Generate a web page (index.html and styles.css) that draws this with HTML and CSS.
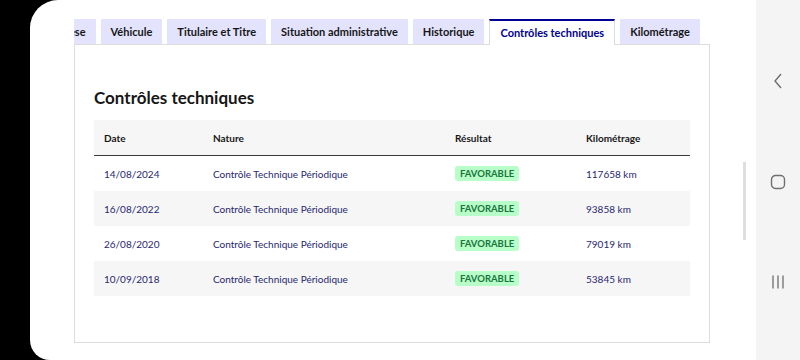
FILE: index.html
```html
<!doctype html>
<html>
  <head>
    <meta charset="UTF-8" />
    <title>Contrôles techniques</title>
    <link rel="stylesheet" href="styles.css">
  </head>
  <body>
    <div class="device">
      <div class="screen">
        <div class="page">
          <div class="tabs">
            <ul class="tabs-list">
              <li class="tab">Synthèse</li>
              <li class="tab">Véhicule</li>
              <li class="tab">Titulaire et Titre</li>
              <li class="tab">Situation administrative</li>
              <li class="tab">Historique</li>
              <li class="tab tab-active">Contrôles techniques</li>
              <li class="tab">Kilométrage</li>
            </ul>
            <div class="panel">
              <h2 class="title">Contrôles techniques</h2>
              <table class="table">
                <thead>
                  <tr>
                    <th class="col-date">Date</th>
                    <th class="col-nature">Nature</th>
                    <th class="col-result">Résultat</th>
                    <th>Kilométrage</th>
                  </tr>
                </thead>
                <tbody>
                  <tr>
                    <td>14/08/2024</td>
                    <td>Contrôle Technique Périodique</td>
                    <td><span class="badge">Favorable</span></td>
                    <td>117658 km</td>
                  </tr>
                  <tr>
                    <td>16/08/2022</td>
                    <td>Contrôle Technique Périodique</td>
                    <td><span class="badge">Favorable</span></td>
                    <td>93858 km</td>
                  </tr>
                  <tr>
                    <td>26/08/2020</td>
                    <td>Contrôle Technique Périodique</td>
                    <td><span class="badge">Favorable</span></td>
                    <td>79019 km</td>
                  </tr>
                  <tr>
                    <td>10/09/2018</td>
                    <td>Contrôle Technique Périodique</td>
                    <td><span class="badge">Favorable</span></td>
                    <td>53845 km</td>
                  </tr>
                </tbody>
              </table>
            </div>
          </div>
          <div class="scrollbar"></div>
        </div>
        <div class="navbar">
          <svg width="12" height="18" viewBox="0 0 12 18"><path d="M9 2 L3 9 L9 16" fill="none" stroke="#6f6f6f" stroke-width="1.4"/></svg>
          <svg width="16" height="16" viewBox="0 0 16 16"><rect x="1.5" y="1.5" width="13" height="13" rx="4" fill="none" stroke="#6f6f6f" stroke-width="1.4"/></svg>
          <svg width="16" height="16" viewBox="0 0 16 16"><path d="M3 1.5 V14.5 M8 1.5 V14.5 M13 1.5 V14.5" fill="none" stroke="#6f6f6f" stroke-width="1.3"/></svg>
        </div>
      </div>
    </div>
  </body>
</html>
```

FILE: styles.css
```css
body {
  margin: 0;
  background: #000;
  font-family: "Lato", "Liberation Sans", sans-serif;
}
.device {
  width: 800px;
  height: 360px;
  padding-left: 30px;
  box-sizing: border-box;
}
.screen {
  display: flex;
  height: 100%;
  background: #fff;
  border-radius: 28px 0 0 20px;
  overflow: hidden;
}
.page {
  position: relative;
  flex: 1;
  padding: 19px 0 0 44px;
}
.tabs {
  width: 636px;
  overflow: hidden;
}
.tabs-list {
  display: flex;
  gap: 5px;
  margin: 0 0 0 -43px;
  padding: 0;
  list-style: none;
}
.tab {
  flex: none;
  height: 25px;
  line-height: 25px;
  padding: 0 10px;
  background: #e3e3fd;
  color: #161616;
  font-size: 11px;
  font-weight: 700;
}
.tab-active {
  background: #fff;
  color: #000091;
  border-top: 2px solid #000091;
  height: 24px;
  line-height: 23px;
  border-left: 1px solid #ddd;
  border-right: 1px solid #ddd;
  margin-bottom: -1px;
  position: relative;
}
.panel {
  border: 1px solid #ddd;
  height: 299px;
  box-sizing: border-box;
  padding: 43px 19px 0 19px;
}
.title {
  margin: 0 0 12px;
  font-size: 17px;
  line-height: 20px;
  font-weight: 700;
  color: #161616;
}
.table {
  width: 100%;
  border-collapse: collapse;
  font-size: 10px;
}
.table th {
  height: 35px;
  padding: 0 10px;
  text-align: left;
  background: #f6f6f6;
  color: #161616;
  font-weight: 700;
  border-bottom: 1px solid #3a3a3a;
}
.col-date {
  width: 89px;
}
.col-nature {
  width: 222px;
}
.col-result {
  width: 111px;
}
.table td {
  height: 35px;
  padding: 0 10px;
  color: #272770;
}
.table tbody tr:nth-child(even) td {
  background: #f6f6f6;
}
.badge {
  display: inline-block;
  padding: 0 5px;
  line-height: 15px;
  border-radius: 3px;
  background: #b8fec9;
  color: #18753c;
  font-size: 9.5px;
  font-weight: 700;
  text-transform: uppercase;
}
.scrollbar {
  position: absolute;
  top: 162px;
  right: 10px;
  width: 3px;
  height: 78px;
  background: #dedede;
}
.navbar {
  width: 44px;
  flex: none;
  background: #f4f4f4;
  display: flex;
  flex-direction: column;
  align-items: center;
  gap: 84px;
  padding-top: 72px;
}
```
